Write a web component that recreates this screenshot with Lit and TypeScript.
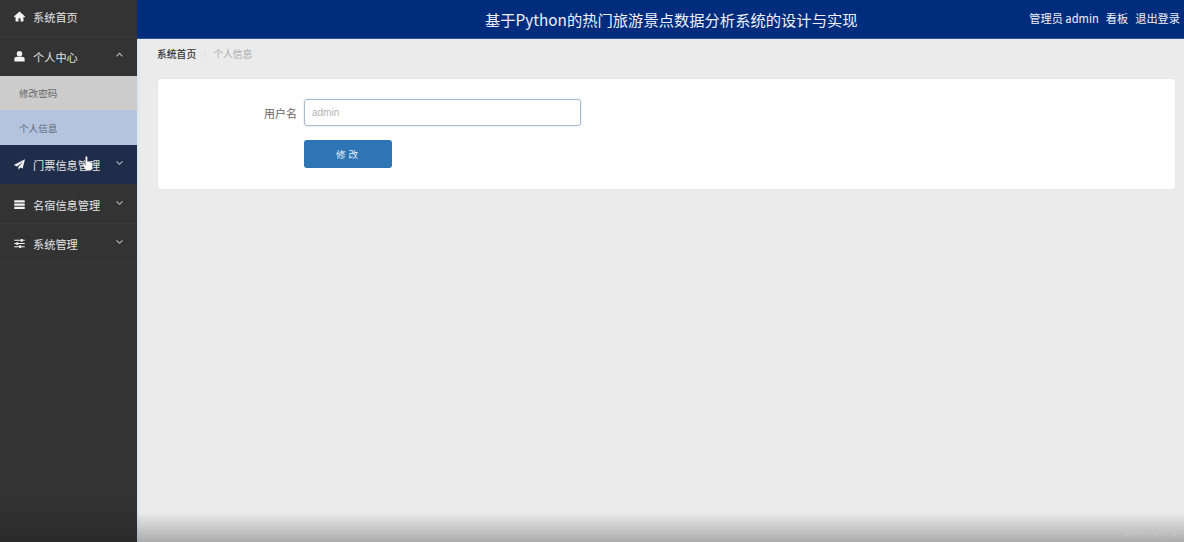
import { LitElement, html, css, svg } from "lit";
import { customElement } from "lit/decorators.js";

const chevDown = svg`<path d="M1.5 1.5 5 5l3.5-3.5" fill="none" stroke="currentColor" stroke-width="1.2"/>`;
const chevUp = svg`<path d="M1.5 5 5 1.5 8.5 5" fill="none" stroke="currentColor" stroke-width="1.2"/>`;

const icons = {
  home: svg`<path d="M6 .6-.1 6l.9 1 .9-.7V11.4h3.2V7.8h2.2v3.6h3.2V6.3l.9.7.9-1z" fill="currentColor"/>`,
  user: svg`<circle cx="6" cy="3.1" r="3" fill="currentColor"/><path d="M.4 11.4V8.8c0-1.6 1.3-2.4 2.7-2.4h5.8c1.4 0 2.7.8 2.7 2.4v2.6z" fill="currentColor"/>`,
  plane: svg`<path d="M12 .4-.2 6.6l3.6 1.5L10.2 2.4 4.8 8.8v2.8l2.1-2.3 2.5 1.1z" fill="currentColor"/>`,
  list: svg`<path d="M.3 1.4h11.4v2.4H.3zM.3 4.9h11.4v2.4H.3zM.3 8.4h11.4v2.4H.3z" fill="currentColor"/>`,
  sliders: svg`<path d="M.3 1.9h11.4v1.2H.3zM.3 5.4h11.4v1.2H.3zM.3 8.9h11.4v1.2H.3z" fill="currentColor"/><path d="M7.4 1h2v3h-2zM2.6 4.5h2v3h-2zM5.8 8h2v3h-2z" fill="currentColor"/>`,
};

@customElement("app-root")
export class AppRoot extends LitElement {
  static styles = css`
    :host {
      display: block;
      width: 1184px;
      height: 542px;
      position: relative;
      overflow: hidden;
      font-family: "Noto Sans CJK SC", "Liberation Sans", sans-serif;
      background: #ebebeb;
    }
    .shell { display: flex; height: 542px; }
    .side {
      width: 137px;
      flex: none;
      background: linear-gradient(to bottom, #333333 0, #333333 500px, #2a2a2a 542px);
      color: #e4e4e4;
    }
    .item {
      display: flex;
      align-items: center;
      height: 39px;
      padding: 1px 13px 0 14px;
      box-sizing: border-box;
      font-size: 11.2px;
      gap: 8px;
      border-bottom: 1px solid #3a3a3a;
    }
    .item.first { height: 38px; padding: 0 13px 4px 14px; }
    .item.open { height: 38px; padding: 0 13px 1px 14px; border-bottom: 0; }
    .item.active { background: #1f2d4a; height: 39px; padding: 0 13px 0 14px; border-bottom: 0; }
    .item.tall { height: 40px; padding: 2px 13px 0 14px; }
    .item svg.ic { width: 11px; height: 11px; flex: none; color: #f2f2f2; overflow: visible; }
    .item span { flex: 1; white-space: nowrap; }
    .item svg.ch { width: 9px; height: 6px; flex: none; color: #bdbdbd; margin-bottom: 4px; }
    .sub {
      display: flex;
      align-items: center;
      padding-left: 19px;
      box-sizing: border-box;
      font-size: 9.6px;
      color: #666;
      height: 34px;
      background: #cccccc;
    }
    .sub.on { background: #b4c4df; height: 35px; color: #5c6675; }
    .main {
      flex: 1;
      min-width: 0;
      display: flex;
      flex-direction: column;
      background: linear-gradient(to right, #dbe5f0, #ebebeb 4px);
      position: relative;
    }
    .top {
      height: 39px;
      background: #002c7e;
      color: #eef1f7;
      display: flex;
      align-items: center;
      position: relative;
      flex: none;
      box-sizing: border-box;
      padding: 0 4px 3px 0;
      justify-content: flex-end;
      border-bottom: 1px solid #2a5196;
    }
    .title {
      position: absolute;
      left: 348px;
      top: 8px;
      font-size: 15.3px;
      line-height: 22px;
      white-space: nowrap;
    }
    .links { display: flex; gap: 7px; font-size: 11.2px; white-space: nowrap; }
    .crumbs {
      display: flex;
      align-items: center;
      gap: 3px;
      height: 30px;
      padding-left: 20px;
      box-sizing: border-box;
      font-size: 9.8px;
      color: #aaa;
      flex: none;
    }
    .crumbs b { color: #333; font-weight: 500; }
    .crumbs i { font-style: normal; color: #cfcfcf; font-size: 10px; width: 11px; text-align: center; }
    .card {
      margin: 9px 8px 0 20px;
      height: 112px;
      background: #fff;
      border-radius: 4px;
      border: 1px solid #e8e8e8;
      box-sizing: border-box;
      display: grid;
      grid-template-columns: 146px 277px;
      grid-template-rows: 27px 28px;
      row-gap: 14px;
      padding-top: 20px;
    }
    .label {
      font-size: 11px;
      color: #666;
      display: flex;
      align-items: center;
      justify-content: flex-end;
      padding-right: 7px;
    }
    .input {
      border: 1.5px solid #a9b9cf;
      border-radius: 3px;
      font-size: 10px;
      color: #b3b3b3;
      display: flex;
      align-items: center;
      padding-left: 7px;
      box-sizing: border-box;
      font-family: "Liberation Sans", sans-serif;
      box-shadow: 0 0 2px rgba(150, 175, 210, 0.5);
    }
    .btn {
      grid-column: 2;
      width: 88px;
      background: #2e75b6;
      border-radius: 3px;
      color: #e9f0f8;
      font-size: 9.6px;
      display: flex;
      align-items: center;
      justify-content: center;
      letter-spacing: 3px;
      padding-left: 1px;
      box-sizing: border-box;
    }
    .fade {
      position: absolute;
      left: 137px;
      right: 0;
      bottom: 0;
      height: 30px;
      background: linear-gradient(to bottom, rgba(0, 0, 0, 0), rgba(0, 0, 0, 0.27));
      pointer-events: none;
    }
    .mark {
      position: absolute;
      right: 6px;
      bottom: 3px;
      font-size: 9px;
      color: #c8c8c8;
      font-family: "Liberation Sans", sans-serif;
    }
    .cursor { position: absolute; left: 82px; top: 156px; width: 12px; height: 16px; }
  `;

  private row(icon: unknown, label: string, cls: string, up = false) {
    return html`<div class="item ${cls}">
      <svg class="ic" viewBox="0 0 12 12">${icon}</svg>
      <span>${label}</span>
      ${cls.includes("first") ? "" : html`<svg class="ch" viewBox="0 0 10 7">${up ? chevUp : chevDown}</svg>`}
    </div>`;
  }

  render() {
    return html`
      <div class="shell">
        <aside class="side">
          ${this.row(icons.home, "系统首页", "first")}
          ${this.row(icons.user, "个人中心", "open", true)}
          <div class="sub">修改密码</div>
          <div class="sub on">个人信息</div>
          ${this.row(icons.plane, "门票信息管理", "active")}
          ${this.row(icons.list, "名宿信息管理", "tall")}
          ${this.row(icons.sliders, "系统管理", "")}
        </aside>
        <main class="main">
          <header class="top">
            <div class="title">基于Python的热门旅游景点数据分析系统的设计与实现</div>
            <div class="links"><span>管理员 admin</span><span>看板</span><span>退出登录</span></div>
          </header>
          <nav class="crumbs"><b>系统首页</b><i>⋮</i><span>个人信息</span></nav>
          <section class="card">
            <div class="label">用户名</div>
            <div class="input">admin</div>
            <div class="btn">修改</div>
          </section>
        </main>
      </div>
      <div class="fade"></div>
      <div class="mark">@51CTO博客</div>
      <svg class="cursor" viewBox="0 0 12 16">
        <path d="M3.4 1.3c0-1.5 2-1.5 2 0v4.4l.4-.3c.8-.4 1.4 0 1.5.5.7-.5 1.4-.1 1.5.6.8-.4 1.6 0 1.6.9v3.6c0 2.2-1.2 3.8-2.9 3.8H5.4c-1.3 0-2-1-2.6-2.3L.7 8.8c-.6-1.1.7-1.9 1.5-1l1.2 1.4z" fill="#fff" stroke="#555" stroke-width=".4"/>
      </svg>
    `;
  }
}
